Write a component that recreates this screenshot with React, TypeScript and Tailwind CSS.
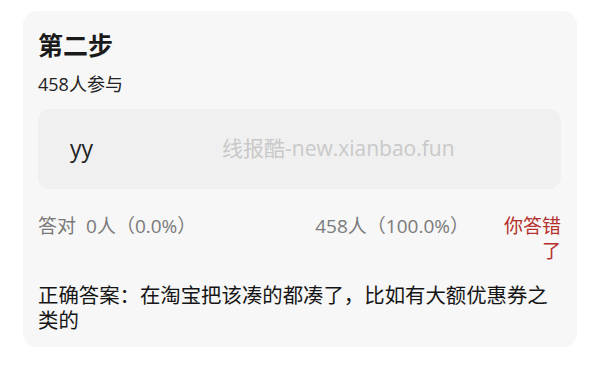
export default function App() {
  return (
    <div
      className="w-[600px] h-[380px] bg-white pt-[11px] px-[23px]"
      style={{ fontFamily: '"Open Sans", "Noto Sans CJK SC", sans-serif' }}
    >
      <div className="bg-[#f7f7f7] rounded-[14px] pl-[15px] pr-[16px] pt-[17px] pb-[14px]">
        <h1 className="text-[25px] leading-[34px] font-bold text-[#1a1a1a]">第二步</h1>
        <p className="mt-[9px] text-[18px] leading-[26px] text-[#222]">458人参与</p>

        <div className="relative mt-[12px] h-[80px] bg-[#f0f0f0] rounded-[12px] flex items-center pl-[32px]">
          <span className="text-[23px] leading-none text-[#222] pb-[2px]">yy</span>
          <span className="absolute left-[184px] top-[27px] text-[21px] leading-[24px] text-[#c9c9c9]">
            线报酷-new.xianbao.fun
          </span>
        </div>

        <div className="mt-[25px] flex text-[19px] leading-[25px]">
          <div className="flex-1 text-[#7a7a7a]">
            答对<span className="ml-[10px]">0人（0.0%）</span>
          </div>
          <div className="text-[#7a7a7a]">458人（100.0%）</div>
          <div className="ml-[30px] w-[62px] text-right text-[#b5302c]">你答错了</div>
        </div>

        <p className="mt-[19px] text-[20.4px] leading-[25px] text-[#151515]">
          正确答案：在淘宝把该凑的都凑了，比如有大额优惠券之类的
        </p>
      </div>
    </div>
  )
}
